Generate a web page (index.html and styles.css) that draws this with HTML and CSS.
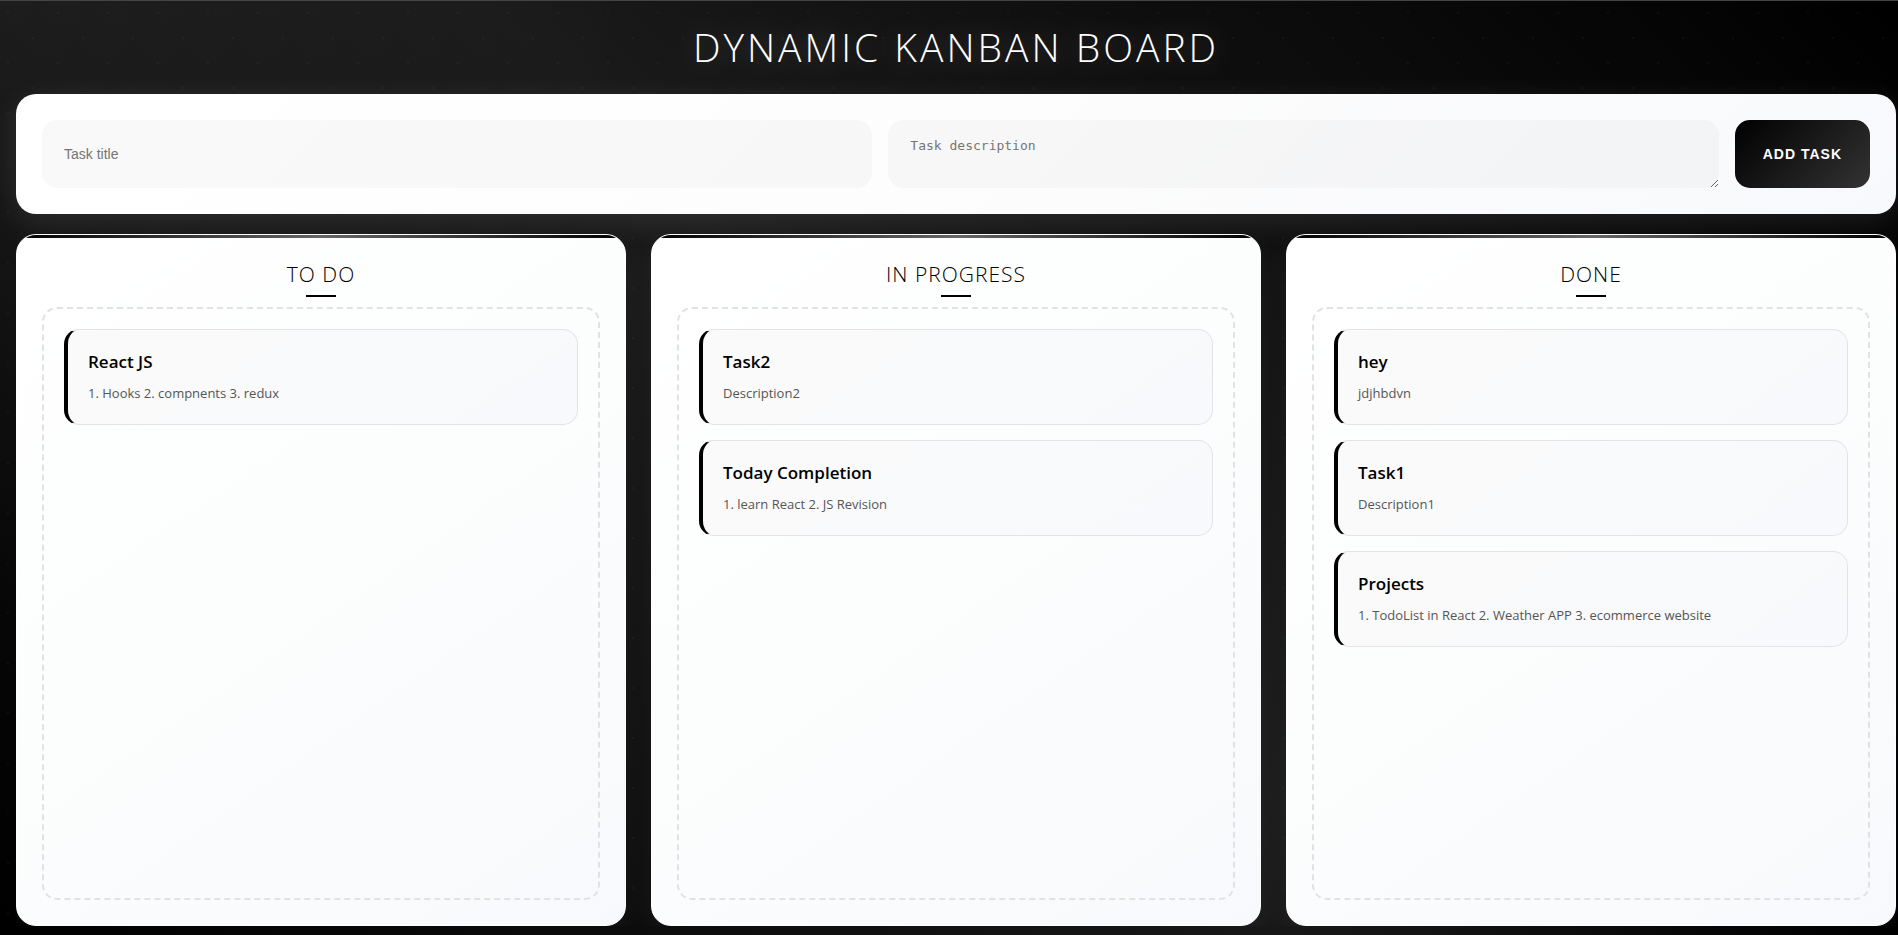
FILE: index.html
```html
<!DOCTYPE html>
<html lang="en">
<head>
<meta charset="utf-8">
<title>Dynamic Kanban Board</title>
<link rel="stylesheet" href="styles.css">
</head>
<body>
<main class="app">
  <h1 class="app-title">Dynamic Kanban Board</h1>
  <form class="task-form">
    <input class="field" type="text" placeholder="Task title" aria-label="Task title">
    <textarea class="field field-area" placeholder="Task description" aria-label="Task description"></textarea>
    <button class="add-button" type="button">Add Task</button>
  </form>
  <div class="board">
    <section class="column">
      <h2 class="column-title">To Do</h2>
      <div class="drop-zone">
        <article class="card"><h3 class="card-title">React JS</h3><p class="card-text">1. Hooks 2. compnents 3. redux</p></article>
      </div>
    </section>
    <section class="column">
      <h2 class="column-title">In Progress</h2>
      <div class="drop-zone">
        <article class="card"><h3 class="card-title">Task2</h3><p class="card-text">Description2</p></article>
        <article class="card"><h3 class="card-title">Today Completion</h3><p class="card-text">1. learn React 2. JS Revision</p></article>
      </div>
    </section>
    <section class="column">
      <h2 class="column-title">Done</h2>
      <div class="drop-zone">
        <article class="card"><h3 class="card-title">hey</h3><p class="card-text">jdjhbdvn</p></article>
        <article class="card"><h3 class="card-title">Task1</h3><p class="card-text">Description1</p></article>
        <article class="card"><h3 class="card-title">Projects</h3><p class="card-text">1. TodoList in React 2. Weather APP 3. ecommerce website</p></article>
      </div>
    </section>
  </div>
</main>
</body>
</html>
```

FILE: styles.css
```css
* {
  box-sizing: border-box;
  margin: 0;
  padding: 0;
}

body {
  min-height: 100vh;
  font-family: "Segoe UI", "Open Sans", "Noto Sans", sans-serif;
  background:
    radial-gradient(circle at 8px 13px, rgba(255, 255, 255, 0.03) 1px, transparent 1px) 0 0 / 50px 50px,
    radial-gradient(circle at 33px 38px, rgba(255, 255, 255, 0.03) 1px, transparent 1px) 0 0 / 50px 50px,
    radial-gradient(circle at 100% 100%, #000 0%, transparent 30%),
    radial-gradient(circle at 0% 0%, rgba(255, 255, 255, 0.05) 0%, transparent 30%),
    linear-gradient(45deg, #000 0%, #1a1a1a 50%, #000 100%);
}

.app {
  display: flex;
  flex-direction: column;
  min-height: 100vh;
  padding: 16px 2px 9px 16px;
  border-top: 1px solid #444;
}

.app-title {
  margin-bottom: 17px;
  color: #fff;
  font-size: 39px;
  font-weight: 300;
  line-height: 60px;
  letter-spacing: 3px;
  text-align: center;
  text-transform: uppercase;
  text-shadow: 0 0 30px rgba(255, 255, 255, 0.3);
}

.task-form {
  display: flex;
  gap: 16px;
  margin-bottom: 20px;
  padding: 26px;
  border-radius: 20px;
  background: linear-gradient(135deg, #fff 0%, #fdfdfd 50%, #f8f9fc 100%);
  box-shadow: 0 8px 32px rgba(255, 255, 255, 0.1);
}

.field {
  flex: 1;
  min-width: 0;
  height: 68px;
  padding: 16px 22px;
  border: 0;
  border-radius: 15px;
  background: rgba(0, 0, 0, 0.024);
  color: #000;
  font-family: "Liberation Sans", Arial, sans-serif;
  font-size: 14px;
}

.field::placeholder {
  color: #757575;
}

.field-area {
  padding: 18px 22px;
  font-family: "DejaVu Sans Mono", monospace;
  font-size: 13px;
  resize: vertical;
}

.add-button {
  padding: 0 28px;
  border: 0;
  border-radius: 15px;
  background: linear-gradient(135deg, #000, #333);
  color: #fff;
  font-family: "Liberation Sans", Arial, sans-serif;
  font-size: 14px;
  font-weight: 600;
  letter-spacing: 1px;
  text-transform: uppercase;
}

.board {
  display: grid;
  flex: 1;
  grid-template-columns: repeat(3, 1fr);
  gap: 25px;
  overflow: hidden;
}

.column {
  position: relative;
  display: flex;
  flex-direction: column;
  overflow: hidden;
  padding: 25px;
  border: 1px solid #fff;
  border-radius: 20px;
  background: linear-gradient(145deg, #fff 0%, #fcfdfd 50%, #f8f9fc 100%);
  box-shadow: 0 8px 32px rgba(255, 255, 255, 0.06);
}

.column::before {
  content: "";
  position: absolute;
  top: 0;
  right: 0;
  left: 0;
  height: 3px;
  background: linear-gradient(90deg, #000, #666, #000);
}

.column-title {
  position: relative;
  margin-bottom: 19px;
  color: #000;
  font-size: 21px;
  font-weight: 300;
  line-height: 28px;
  letter-spacing: 1px;
  text-align: center;
  text-transform: uppercase;
}

.column-title::after {
  content: "";
  position: absolute;
  bottom: -9px;
  left: 50%;
  width: 30px;
  height: 2px;
  margin-left: -15px;
  background: #000;
}

.drop-zone {
  display: flex;
  flex: 1;
  flex-direction: column;
  gap: 15px;
  padding: 20px;
  border: 2px dashed #e1e2e3;
  border-radius: 15px;
}

.card {
  padding: 20px;
  border: 1px solid #e1e3e4;
  border-left: 4px solid #000;
  border-radius: 15px;
  background: linear-gradient(145deg, #fafafa, #f8f9fc);
}

.card-title {
  margin-bottom: 8px;
  color: #000;
  font-size: 17px;
  font-weight: 600;
  line-height: 24px;
}

.card-text {
  color: #555;
  font-size: 13px;
  line-height: 22px;
}
```
